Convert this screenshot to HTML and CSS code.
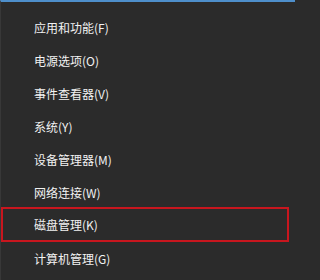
FILE: index.html
```html
<!DOCTYPE html>
<html lang="zh-CN">
<head>
<meta charset="utf-8">
<link rel="stylesheet" href="styles.css">
</head>
<body>
<div class="menu">
  <div class="item">应用和功能(F)</div>
  <div class="item">电源选项(O)</div>
  <div class="item">事件查看器(V)</div>
  <div class="item">系统(Y)</div>
  <div class="item">设备管理器(M)</div>
  <div class="item">网络连接(W)</div>
  <div class="item item-marked">磁盘管理(K)</div>
  <div class="item">计算机管理(G)</div>
</div>
</body>
</html>
```
FILE: styles.css
```css
html, body {
  margin: 0;
  padding: 0;
  background: #2b2b2b;
}
.menu {
  width: 295px;
  height: 280px;
  box-sizing: border-box;
  border-top: 2px solid #4e8fcb;
  border-left: 1px solid #383838;
  padding-top: 9px;
  display: flex;
  flex-direction: column;
  background: #2b2b2b;
  font-family: "Noto Sans CJK SC", "Microsoft YaHei", sans-serif;
  font-size: 12px;
  color: #f2f2f2;
}
.item {
  height: 33px;
  line-height: 33px;
  padding-left: 33px;
  box-sizing: border-box;
  white-space: nowrap;
}
.item-marked {
  height: 35px;
  line-height: 31px;
  margin: -2px 6px 0 0;
  padding-left: 31px;
  border: 2px solid #c8161e;
}
```
